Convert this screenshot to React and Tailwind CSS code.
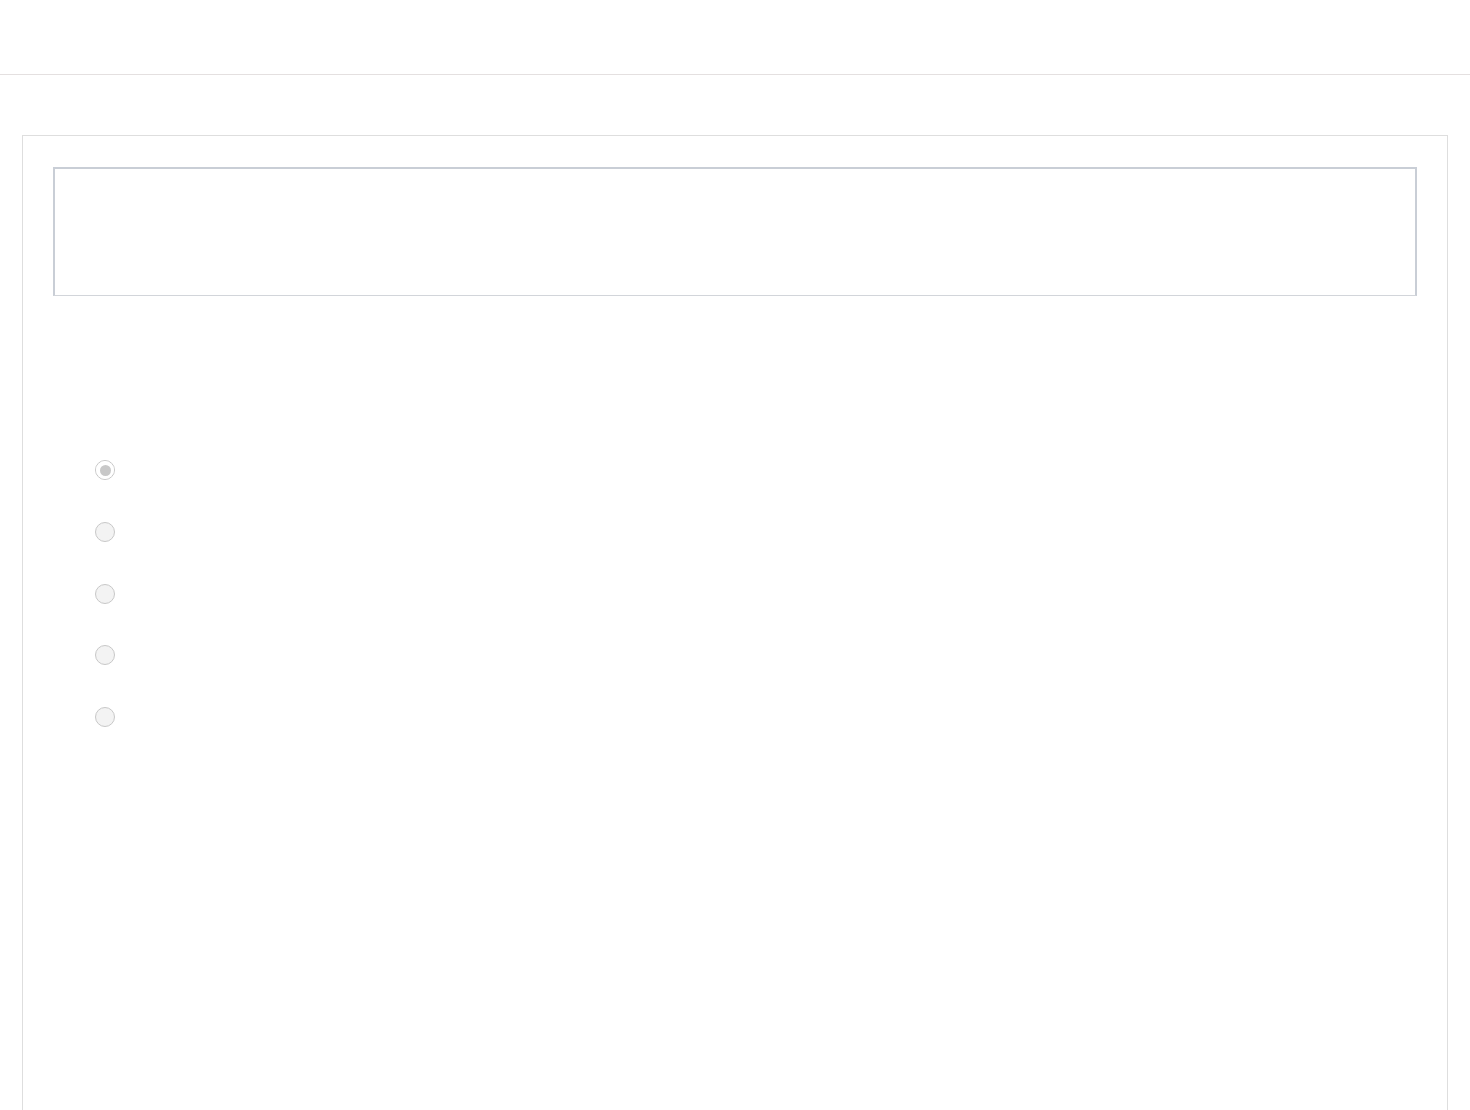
export default function App() {
  const options = [true, false, false, false, false]

  return (
    <div className="min-h-[1110px] bg-white font-['Liberation_Sans',sans-serif]">
      <header className="h-[75px] border-b border-[#e4e0e0]" />

      <main className="mx-[22px] mt-[60px] min-h-[1000px] border border-b-0 border-[#dedede] px-[30px] pt-[31px]">
        <div className="h-[129px] border-2 border-b border-[#c9ced6] border-b-[#d2d5da]" />

        <div className="mt-[164px] flex flex-col gap-[41.75px] pl-[42px]">
          {options.map((checked, i) => (
            <label key={i} className="flex h-5 items-center">
              <span className="flex h-5 w-5 items-center justify-center rounded-full border border-[#c8c8c8] bg-[#f3f3f3]">
                {checked && (
                  <span className="flex h-[18px] w-[18px] items-center justify-center rounded-full bg-white">
                    <span className="h-[11px] w-[11px] rounded-full bg-[#c8c8c8]" />
                  </span>
                )}
              </span>
            </label>
          ))}
        </div>
      </main>
    </div>
  )
}
